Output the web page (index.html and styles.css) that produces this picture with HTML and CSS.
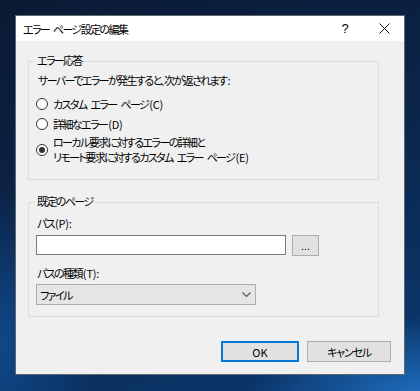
FILE: index.html
```html
<!DOCTYPE html>
<html lang="ja">
<head>
    <meta charset="UTF-8">
    <title>エラー ページ設定の編集</title>
    <link rel="stylesheet" href="styles.css">
</head>
<body>
    <div class="dialog">
        <!-- Title bar -->
        <div class="titlebar">
            <span class="title">エラー ページ設定の編集</span>
            <span class="help">?</span>
            <span class="close">
                <svg width="11" height="11" viewBox="0 0 11 11"><path d="M0.5 0.5 L10.5 10.5 M10.5 0.5 L0.5 10.5" stroke="#111" stroke-width="1" fill="none"/></svg>
            </span>
        </div>

        <div class="content">
            <!-- Error response -->
            <div class="group group-response">
                <div class="group-title">エラー応答</div>
                <p class="intro">サーバーでエラーが発生すると、次が返されます<span class="akey">:</span></p>
                <label class="radio-row radio-first">
                    <input type="radio" name="mode">
                    <span>カスタム エラー ページ<span class="akey">(C)</span></span>
                </label>
                <label class="radio-row">
                    <input type="radio" name="mode">
                    <span>詳細なエラー<span class="akey">(D)</span></span>
                </label>
                <label class="radio-row radio-multi">
                    <input type="radio" name="mode" checked>
                    <span>ローカル要求に対するエラーの詳細と<br>リモート要求に対するカスタム エラー ページ<span class="akey">(E)</span></span>
                </label>
            </div>

            <!-- Default page -->
            <div class="group group-default">
                <div class="group-title">既定のページ</div>
                <div class="field-label">パス<span class="akey">(P):</span></div>
                <div class="path-row">
                    <input type="text" class="path-input">
                    <button class="browse">...</button>
                </div>
                <div class="field-label field-label-type">パスの種類<span class="akey">(T):</span></div>
                <div class="select">
                    <span>ファイル</span>
                    <svg width="9" height="6" viewBox="0 0 9 6"><polyline points="0.5,0.5 4.5,4.5 8.5,0.5" stroke="#555" stroke-width="1.1" fill="none"/></svg>
                </div>
            </div>

            <!-- Buttons -->
            <div class="buttons">
                <button class="btn btn-default">OK</button>
                <button class="btn">キャンセル</button>
            </div>
        </div>
    </div>
</body>
</html>
```

FILE: styles.css
```css
html, body {
    height: 100%;
}
body {
    margin: 0;
    overflow: hidden;
    font-family: "Noto Sans CJK JP", "Noto Sans", sans-serif;
    font-feature-settings: "palt";
    font-size: 11px;
    letter-spacing: -1.6px;
    word-spacing: 3px;
    color: #000;
    background:
        radial-gradient(ellipse 260px 120px at 430px 400px, rgba(40, 130, 220, 0.75), rgba(40, 130, 220, 0) 70%),
        radial-gradient(ellipse 140px 220px at 0px 340px, rgba(20, 90, 170, 0.6), rgba(20, 90, 170, 0) 70%),
        linear-gradient(160deg, #0a1a34 0%, #0b2448 45%, #0a3a72 100%);
}
.akey {
    letter-spacing: -0.2px;
    margin-left: 1px;
}
.dialog {
    margin: 15px 0 0 15px;
    width: 388px;
    height: 358px;
    border: 1px solid #5f6670;
    background: #f0f0f0;
    display: flex;
    flex-direction: column;
}
.titlebar {
    height: 25px;
    background: #fff;
    display: flex;
    align-items: center;
    padding-left: 7px;
}
.title {
    flex: 1;
}
.help {
    width: 14px;
    text-align: center;
    font-family: "Liberation Sans", sans-serif;
    font-size: 13px;
    letter-spacing: 0;
    margin-right: 27px;
}
.close {
    display: flex;
    width: 11px;
    margin-right: 14px;
}
.content {
    flex: 1;
    padding: 20px 25px 0 12px;
}
.group {
    border: 1px solid #dcdcdc;
    padding: 0 6px 0 7px;
}
.group-title {
    width: fit-content;
    margin: -10px 0 0 -1px;
    padding: 0 2px;
    background: #f0f0f0;
    line-height: 16px;
}
.group-response {
    padding-bottom: 14px;
}
.intro {
    margin: 4px 0 0 2px;
    line-height: 16px;
}
.radio-row {
    display: flex;
    align-items: center;
    height: 20px;
}
.radio-first {
    margin-top: 6px;
}
.radio-multi {
    height: 30px;
    margin-top: 1px;
    line-height: 15px;
}
.radio-row input {
    appearance: none;
    -webkit-appearance: none;
    margin: 0 5px 0 0;
    width: 12px;
    height: 12px;
    border: 1px solid #333;
    border-radius: 50%;
    background: #fff;
    flex: none;
    display: grid;
    place-items: center;
}
.radio-row input:checked::after {
    content: "";
    width: 6px;
    height: 6px;
    border-radius: 50%;
    background: #333;
}
.group-default {
    margin-top: 22px;
    padding-bottom: 11px;
}
.field-label {
    margin: 6px 0 0 1px;
    line-height: 16px;
}
.path-row {
    display: flex;
    gap: 6px;
    margin-top: 4px;
}
.path-input {
    box-sizing: border-box;
    width: 250px;
    height: 20px;
    margin: 0;
    border: 1px solid #7a7a7a;
    background: #fff;
}
.browse {
    box-sizing: border-box;
    width: 27px;
    height: 21px;
    padding: 0;
    border: 1px solid #adadad;
    background: #e1e1e1;
    font-family: "Liberation Sans", sans-serif;
    font-size: 11px;
    letter-spacing: 0;
    line-height: 14px;
}
.field-label-type {
    margin-top: 9px;
}
.select {
    box-sizing: border-box;
    width: 220px;
    height: 21px;
    margin-top: 3px;
    border: 1px solid #acacac;
    background: #e5e5e5;
    display: flex;
    align-items: center;
    justify-content: space-between;
    padding: 0 4px 0 3px;
}
.buttons {
    display: flex;
    justify-content: flex-end;
    gap: 8px;
    margin: 24px -12px 0 0;
}
.btn {
    box-sizing: border-box;
    width: 78px;
    height: 21px;
    padding: 0;
    border: 1px solid #adadad;
    background: #e1e1e1;
    font-family: "Noto Sans CJK JP", sans-serif;
    font-feature-settings: "palt";
    font-size: 11px;
    letter-spacing: -1.2px;
    line-height: 16px;
    color: #000;
}
.btn + .btn {
    width: 84px;
}
.btn-default {
    border: 2px solid #0078d7;
    letter-spacing: 0;
}
```
